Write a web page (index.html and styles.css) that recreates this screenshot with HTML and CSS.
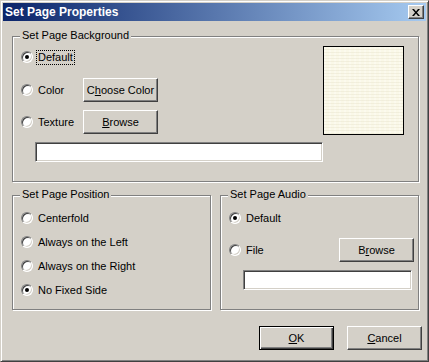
FILE: index.html
```html
<!DOCTYPE html>
<html lang="en">
<head>
    <meta charset="UTF-8">
    <title>Set Page Properties</title>
    <link rel="stylesheet" href="styles.css">
</head>
<body>

<div class="window">
    <div class="titlebar">
        <span class="title">Set Page Properties</span>
        <span class="close-btn">
            <svg width="8" height="7" viewBox="0 0 8 7"><path d="M0 0h2l2 2.4 2-2.4h2l-3 3.5 3 3.5h-2l-2-2.4-2 2.4h-2l3-3.5z" fill="#000"/></svg>
        </span>
    </div>

    <div class="dialog-body">
        <div class="group group-bg">
            <span class="legend">Set Page Background</span>
            <div class="bg-options">
                <div class="row row-default">
                    <span class="radio checked"></span>
                    <span class="label focus">Default</span>
                </div>
                <div class="row row-color">
                    <span class="radio"></span>
                    <span class="label fixed">Color</span>
                    <button class="btn">C<u>h</u>oose Color</button>
                </div>
                <div class="row row-texture">
                    <span class="radio"></span>
                    <span class="label fixed">Texture</span>
                    <button class="btn"><u>B</u>rowse</button>
                </div>
                <div class="textbox texture-path"></div>
            </div>
            <div class="preview"></div>
        </div>

        <div class="lower">
            <div class="group group-pos">
                <span class="legend">Set Page Position</span>
                <div class="row row-first">
                    <span class="radio"></span>
                    <span class="label">Centerfold</span>
                </div>
                <div class="row">
                    <span class="radio"></span>
                    <span class="label">Always on the Left</span>
                </div>
                <div class="row">
                    <span class="radio"></span>
                    <span class="label">Always on the Right</span>
                </div>
                <div class="row">
                    <span class="radio checked"></span>
                    <span class="label">No Fixed Side</span>
                </div>
            </div>

            <div class="group group-audio">
                <span class="legend">Set Page Audio</span>
                <div class="row row-first">
                    <span class="radio checked"></span>
                    <span class="label">Default</span>
                </div>
                <div class="row row-file">
                    <span class="radio"></span>
                    <span class="label">File</span>
                    <button class="btn push-right">B<u>r</u>owse</button>
                </div>
                <div class="textbox audio-path"></div>
            </div>
        </div>

        <div class="actions">
            <button class="btn default"><u>O</u>K</button>
            <button class="btn"><u>C</u>ancel</button>
        </div>
    </div>
</div>

</body>
</html>
```

FILE: styles.css
```css
body {
    margin: 0;
    padding: 0;
    background-color: #d4d0c8;
    font-family: "Liberation Sans", Arial, sans-serif;
    font-size: 11px;
    color: #000000;
}

.window {
    width: 429px;
    height: 362px;
    box-sizing: border-box;
    padding: 2px;
    background-color: #d4d0c8;
    border: 1px solid;
    border-color: #d4d0c8 #404040 #404040 #d4d0c8;
    box-shadow: inset 1px 1px 0 #ffffff, inset -1px -1px 0 #808080;
}

.titlebar {
    height: 18px;
    display: flex;
    align-items: center;
    justify-content: space-between;
    padding-left: 2px;
    background: linear-gradient(to right, #0a246a, #a6caf0);
}

.title {
    color: #ffffff;
    font-weight: bold;
    font-size: 12px;
}

.close-btn {
    width: 16px;
    height: 14px;
    box-sizing: border-box;
    margin-right: 2px;
    display: flex;
    align-items: center;
    justify-content: center;
    background-color: #d4d0c8;
    border: 1px solid;
    border-color: #ffffff #404040 #404040 #ffffff;
    box-shadow: inset -1px -1px 0 #808080;
}

.dialog-body {
    padding: 15px 0 0 9px;
}

/* etched group boxes */
.group {
    position: relative;
    box-sizing: border-box;
    border: 1px solid #808080;
    box-shadow: inset 1px 1px 0 #ffffff, 1px 1px 0 #ffffff;
}

.legend {
    position: absolute;
    top: -8px;
    left: 7px;
    padding: 0 2px;
    line-height: 13px;
    background-color: #d4d0c8;
}

.group-bg {
    width: 407px;
    height: 146px;
    display: flex;
}

.bg-options {
    flex: 1;
    padding-left: 8px;
    display: flex;
    flex-direction: column;
}

.preview {
    width: 81px;
    height: 89px;
    box-sizing: border-box;
    margin: 9px 14px 0 0;
    border: 1px solid #000000;
    background-color: #faf8e8;
    background-image:
        repeating-linear-gradient(0deg, rgba(222, 216, 190, 0.3) 0 1px, transparent 1px 3px),
        repeating-linear-gradient(90deg, rgba(255, 255, 250, 0.35) 0 2px, transparent 2px 5px);
}

.row {
    height: 24px;
    display: flex;
    align-items: center;
}

.row-default { margin-top: 8px; }
.row-color { margin-top: 9px; }
.row-texture { margin-top: 8px; }

.radio {
    flex: none;
    position: relative;
    width: 12px;
    height: 12px;
    box-sizing: border-box;
    margin-right: 4px;
    border-radius: 50%;
    background-color: #ffffff;
    border: 1px solid;
    border-color: #808080 #ffffff #ffffff #808080;
    box-shadow: inset 1px 1px 0 #404040, inset -1px -1px 0 #d4d0c8;
}

.radio.checked::after {
    content: '';
    position: absolute;
    left: 3px;
    top: 3px;
    width: 4px;
    height: 4px;
    border-radius: 50%;
    background-color: #000000;
}

.label {
    padding: 0 1px;
    line-height: 13px;
}

.label.fixed {
    width: 46px;
    box-sizing: border-box;
}

.label.focus {
    outline: 1px dotted #000000;
}

.btn {
    width: 75px;
    height: 24px;
    box-sizing: border-box;
    padding: 0;
    font-family: "Liberation Sans", Arial, sans-serif;
    font-size: 11px;
    color: #000000;
    background-color: #d4d0c8;
    border: 1px solid;
    border-color: #ffffff #404040 #404040 #ffffff;
    box-shadow: inset -1px -1px 0 #808080;
}

.btn.default {
    border-color: #000000;
    box-shadow: inset 1px 1px 0 #ffffff, inset -1px -1px 0 #404040, inset -2px -2px 0 #808080;
}

.push-right {
    margin-left: auto;
}

.textbox {
    height: 20px;
    box-sizing: border-box;
    background-color: #ffffff;
    border: 1px solid;
    border-color: #808080 #ffffff #ffffff #808080;
    box-shadow: inset 1px 1px 0 #404040, inset -1px -1px 0 #d4d0c8;
}

.texture-path {
    width: 288px;
    margin: 8px 0 0 14px;
}

.lower {
    width: 407px;
    margin-top: 13px;
    display: flex;
    gap: 9px;
}

.group-pos,
.group-audio {
    width: 199px;
    height: 115px;
    padding: 0 4px 0 8px;
}

.row-first { margin-top: 10px; }
.row-file { margin-top: 8px; }

.audio-path {
    width: 169px;
    margin: 8px 0 0 14px;
}

.actions {
    width: 410px;
    margin-top: 16px;
    display: flex;
    justify-content: flex-end;
    gap: 13px;
}
```
